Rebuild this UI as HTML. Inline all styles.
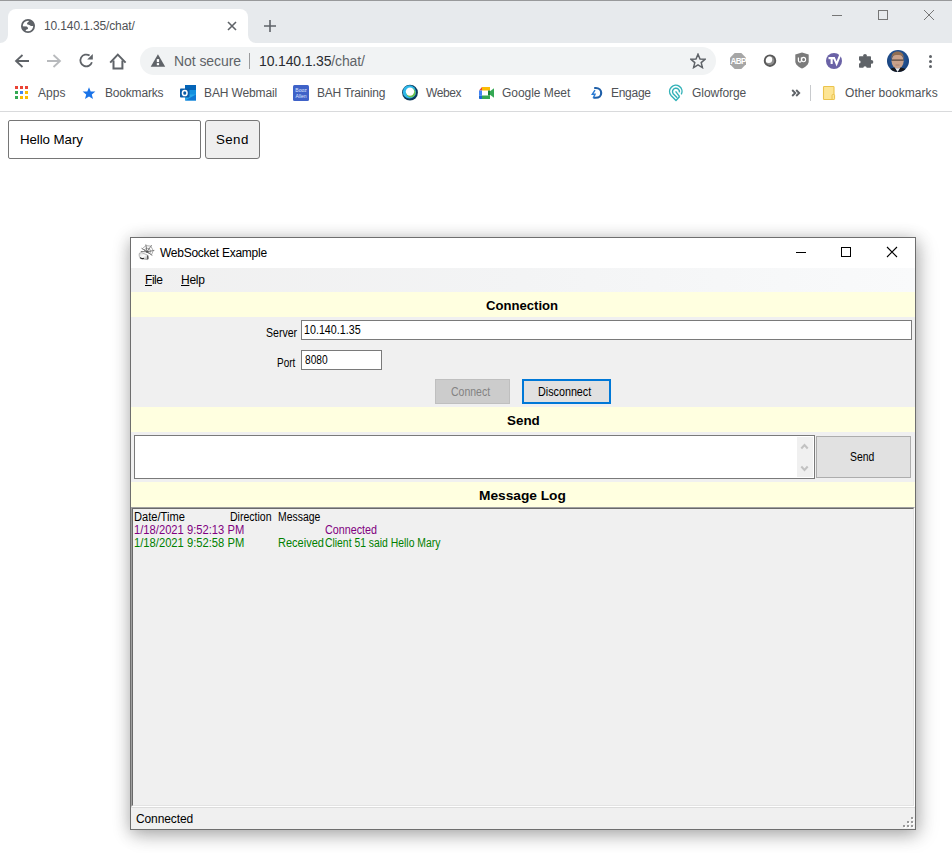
<!DOCTYPE html><html><head><meta charset="utf-8"><style>
html,body{margin:0;padding:0;}
body{width:952px;height:853px;overflow:hidden;position:relative;background:#fff;font-family:"Liberation Sans", sans-serif;}
.t{position:absolute;white-space:nowrap;line-height:1;}
.b{position:absolute;box-sizing:border-box;}
</style></head><body>
<div class="b" style="left:0px;top:0px;width:952px;height:1px;background:#98999b"></div>
<div class="b" style="left:0px;top:1px;width:952px;height:42px;background:#e7eaed"></div>
<div class="b" style="left:8px;top:9px;width:240px;height:34px;background:#fff;border-radius:8px 8px 0 0"></div>
<svg class="b" style="left:0px;top:35px;" width="8" height="8" viewBox="0 0 8 8"><path d="M8 0 V8 H0 A8 8 0 0 0 8 0Z" fill="#fff"/></svg>
<svg class="b" style="left:248px;top:35px;" width="8" height="8" viewBox="0 0 8 8"><path d="M0 0 V8 H8 A8 8 0 0 1 0 0Z" fill="#fff"/></svg>
<svg class="b" style="left:21px;top:19px;" width="14" height="14" viewBox="0 0 14 14"><defs><clipPath id="gc"><circle cx="7" cy="7" r="6.5"/></clipPath></defs><circle cx="7" cy="7" r="6.1" fill="none" stroke="#5f6368" stroke-width="1.8"/><g clip-path="url(#gc)" fill="#5f6368"><path d="M7.6 0 L8.2 2.1 L6.1 4 L6.1 5.3 L8.3 5.9 L10 7.1 L14 7.1 L14 0 Z"/><path d="M0 7.2 L5.9 7.6 L7.1 9 L6.8 10.1 L4.7 11.1 L4.4 14 L0 14 Z"/></g></svg>
<div class="t" style="left:44px;top:20px;font-size:12px;color:#4f5256;font-weight:normal;letter-spacing:-0.125px;">10.140.1.35/chat/</div>
<svg class="b" style="left:227px;top:21px;" width="10" height="10" viewBox="0 0 10 10"><path d="M1 1 L9 9 M9 1 L1 9" stroke="#5f6368" stroke-width="1.6"/></svg>
<svg class="b" style="left:263px;top:19px;" width="14" height="14" viewBox="0 0 14 14"><path d="M7 1 V13 M1 7 H13" stroke="#5f6368" stroke-width="1.6"/></svg>
<div class="b" style="left:832px;top:15px;width:10px;height:1px;background:#767676"></div>
<div class="b" style="left:878px;top:10px;width:10px;height:10px;border:1px solid #767676"></div>
<svg class="b" style="left:923px;top:9px;" width="12" height="12" viewBox="0 0 12 12"><path d="M1 1 L11 11 M11 1 L1 11" stroke="#767676" stroke-width="1"/></svg>
<svg class="b" style="left:14px;top:53px;" width="16" height="16" viewBox="0 0 16 16"><path d="M15 8 H2.5 M8.5 2 L2 8 L8.5 14" fill="none" stroke="#5f6368" stroke-width="1.8"/></svg>
<svg class="b" style="left:46px;top:53px;" width="16" height="16" viewBox="0 0 16 16"><path d="M1 8 H13.5 M7.5 2 L14 8 L7.5 14" fill="none" stroke="#b8babd" stroke-width="1.8"/></svg>
<svg class="b" style="left:78px;top:53px;" width="16" height="16" viewBox="0 0 16 16"><path d="M13.9 9.2 A5.9 5.9 0 1 1 11.6 2.6" fill="none" stroke="#5f6368" stroke-width="1.8"/><path d="M9.2 6.5 L14.8 0.9 L14.8 6.5 Z" fill="#5f6368"/></svg>
<svg class="b" style="left:109px;top:53px;" width="18" height="18" viewBox="0 0 18 18"><path d="M1.2 9.6 L8.8 1.6 L16.6 9.6" fill="none" stroke="#5f6368" stroke-width="2"/><path d="M4.5 7.5 V15.6 H13.4 V7.5" fill="none" stroke="#5f6368" stroke-width="2"/></svg>
<div class="b" style="left:140px;top:47px;width:576px;height:28px;background:#f1f3f4;border-radius:14px"></div>
<svg class="b" style="left:150px;top:54px;" width="16" height="13" viewBox="0 0 16 13"><path d="M7.95 0.3 L15.2 12.7 H0.7 Z" fill="#5f6368"/><rect x="6.8" y="5.1" width="2.3" height="3" fill="#fff"/><rect x="6.8" y="9.1" width="2.3" height="2.1" fill="#fff"/></svg>
<div class="t" style="left:174px;top:54px;font-size:14px;color:#5f6368;font-weight:normal;letter-spacing:-0.071px;">Not secure</div>
<div class="b" style="left:249px;top:53px;width:1px;height:16px;background:#9a9b9d"></div>
<div class="t" style="left:259px;top:54px;font-size:14px;color:#5f6368;font-weight:normal;letter-spacing:-0.15px;"><span style="color:#2a2c30">10.140.1.35</span>/chat/</div>
<svg class="b" style="left:690px;top:53px;" width="16" height="16" viewBox="0 0 16 16"><path d="M8 1.2 L10 6 L15 6.3 L11.2 9.6 L12.4 14.6 L8 11.9 L3.6 14.6 L4.8 9.6 L1 6.3 L6 6 Z" fill="none" stroke="#5f6368" stroke-width="1.5" stroke-linejoin="miter"/></svg>
<svg class="b" style="left:730px;top:53px;" width="16" height="16" viewBox="0 0 16 16"><path d="M4.7 0 H11.3 L16 4.7 V11.3 L11.3 16 H4.7 L0 11.3 V4.7 Z" fill="#a6a6a6"/><text x="8.2" y="11.4" font-family="Liberation Sans" font-weight="bold" font-size="8.2" fill="#fff" text-anchor="middle" letter-spacing="-0.7">ABP</text></svg>
<svg class="b" style="left:763px;top:54px;" width="14" height="14" viewBox="0 0 14 14"><defs><clipPath id="cc"><circle cx="7" cy="6.7" r="5"/></clipPath></defs><g clip-path="url(#cc)"><rect width="14" height="14" fill="#8e8e8e"/><circle cx="5.7" cy="5.4" r="3.5" fill="#fff"/></g><circle cx="7" cy="6.7" r="5.3" fill="none" stroke="#595959" stroke-width="1.9"/></svg>
<svg class="b" style="left:795px;top:52px;" width="14" height="17" viewBox="0 0 14 17"><path d="M0.3 2.6 L7 0.6 L13.7 2.6 V9.2 C13.7 12.6 10.4 15 7 16.6 C3.6 15 0.3 12.6 0.3 9.2 Z" fill="#7b7b7b"/><path d="M3.4 5.6 V8.6 A1.5 1.5 0 0 0 6.4 8.6 V5.6" fill="none" stroke="#fff" stroke-width="1.2"/><ellipse cx="8.6" cy="7.6" rx="2" ry="2.2" fill="none" stroke="#fff" stroke-width="1.1"/></svg>
<svg class="b" style="left:826px;top:52px;" width="17" height="17" viewBox="0 0 17 17"><circle cx="8" cy="9" r="8" fill="#6a62a6"/><rect x="2.5" y="5" width="6.2" height="2.2" fill="#fff"/><rect x="4.6" y="5" width="2.1" height="7" fill="#fff"/><path d="M7.8 5.4 L10.6 11.8 L14.8 1.4" fill="none" stroke="#fff" stroke-width="2"/></svg>
<svg class="b" style="left:858px;top:53px;" width="16" height="16" viewBox="0 0 16 16"><rect x="1" y="3.2" width="12" height="11.6" rx="0.8" fill="#5f6368"/><circle cx="7" cy="2.8" r="1.9" fill="#5f6368"/><circle cx="13.4" cy="8.9" r="1.9" fill="#5f6368"/><circle cx="0.9" cy="8.9" r="1.7" fill="#fff"/><circle cx="7" cy="14.9" r="1.7" fill="#fff"/></svg>
<svg class="b" style="left:887px;top:50px;" width="22" height="22" viewBox="0 0 22 22"><defs><clipPath id="av"><circle cx="11" cy="11" r="11"/></clipPath><radialGradient id="avg" cx="0.5" cy="0.4" r="0.6"><stop offset="0" stop-color="#2f64a8"/><stop offset="1" stop-color="#163f7a"/></radialGradient></defs><g clip-path="url(#av)"><rect width="22" height="22" fill="url(#avg)"/><ellipse cx="10.6" cy="11.2" rx="6" ry="7.6" fill="#c9a18a"/><path d="M4.4 9.5 C4 3.5 7 1.6 10.6 1.6 C14.2 1.6 17.2 3.5 16.8 9.5 L15.8 6.5 C13.5 4.6 8 4.6 5.4 6.5 Z" fill="#8f6d52"/><rect x="4.6" y="9.4" width="12" height="1.5" fill="#5d4a40" opacity="0.85"/><rect x="8.5" y="14.6" width="4" height="0.9" fill="#a07868" opacity="0.8"/><path d="M0 22 C2 18.5 5.5 17.6 8 17.8 L10.6 22 L13.2 17.8 C15.7 17.6 19.5 18.5 22 22 Z" fill="#15171c"/><path d="M8 17.8 L10.6 22 L13.2 17.8 C12 18.6 9.2 18.6 8 17.8 Z" fill="#eeeeee"/></g></svg>
<div class="b" style="left:928.5px;top:55.0px;width:3px;height:3px;background:#5f6368;border-radius:50%"></div>
<div class="b" style="left:928.5px;top:60.0px;width:3px;height:3px;background:#5f6368;border-radius:50%"></div>
<div class="b" style="left:928.5px;top:65.0px;width:3px;height:3px;background:#5f6368;border-radius:50%"></div>
<div class="b" style="left:15px;top:86px;width:3px;height:3px;background:#ea4335"></div>
<div class="b" style="left:20px;top:86px;width:3px;height:3px;background:#ea4335"></div>
<div class="b" style="left:25px;top:86px;width:3px;height:3px;background:#ea4335"></div>
<div class="b" style="left:15px;top:91px;width:3px;height:3px;background:#34a853"></div>
<div class="b" style="left:20px;top:91px;width:3px;height:3px;background:#4285f4"></div>
<div class="b" style="left:25px;top:91px;width:3px;height:3px;background:#fbbc04"></div>
<div class="b" style="left:15px;top:96px;width:3px;height:3px;background:#34a853"></div>
<div class="b" style="left:20px;top:96px;width:3px;height:3px;background:#fbbc04"></div>
<div class="b" style="left:25px;top:96px;width:3px;height:3px;background:#fbbc04"></div>
<div class="t" style="left:38px;top:87px;font-size:12px;color:#4f5256;font-weight:normal;letter-spacing:0.067px;">Apps</div>
<svg class="b" style="left:82px;top:87px;" width="14" height="13" viewBox="0 0 14 13"><path d="M7 0.2 L8.7 4.5 L13.4 4.6 L9.8 7.5 L11 12 L7 9.5 L3 12 L4.2 7.5 L0.6 4.6 L5.3 4.5 Z" fill="#1a73e8"/></svg>
<div class="t" style="left:105px;top:87px;font-size:12px;color:#4f5256;font-weight:normal;letter-spacing:-0.188px;">Bookmarks</div>
<svg class="b" style="left:180px;top:85px;" width="16" height="16" viewBox="0 0 16 16"><rect x="5" y="0" width="11" height="5.5" fill="#0364b8"/><rect x="5" y="5" width="11" height="5" fill="#1490df"/><path d="M5 9.5 H16 V15.5 H5Z" fill="#28a8ea"/><path d="M5 15.5 L16 9.5 V15.5Z" fill="#0f78d4"/><rect x="0" y="3.5" width="9.5" height="9" rx="0.8" fill="#0a5ca8"/><ellipse cx="4.75" cy="8" rx="2.3" ry="2.6" fill="none" stroke="#fff" stroke-width="1.5"/></svg>
<div class="t" style="left:204px;top:87px;font-size:12px;color:#4f5256;font-weight:normal;letter-spacing:-0.12px;">BAH Webmail</div>
<svg class="b" style="left:293px;top:85px;" width="16" height="16" viewBox="0 0 16 16"><rect width="16" height="16" rx="1.5" fill="#3f62c8"/><text x="8" y="7.2" font-size="5" font-family="Liberation Sans" fill="#dfe6ff" text-anchor="middle">Booz</text><text x="8" y="12.8" font-size="5" font-family="Liberation Sans" fill="#dfe6ff" text-anchor="middle">Allen</text></svg>
<div class="t" style="left:317px;top:87px;font-size:12px;color:#4f5256;font-weight:normal;letter-spacing:-0.218px;">BAH Training</div>
<svg class="b" style="left:402px;top:84px;" width="16" height="17" viewBox="0 0 16 17"><circle cx="8" cy="8.6" r="7.9" fill="#0b3a5c"/><circle cx="7.4" cy="7.9" r="6.6" fill="#2fb8ea"/><circle cx="8.9" cy="8.8" r="4.7" fill="#6dbe4b"/><circle cx="8" cy="7.6" r="4.2" fill="#fff"/></svg>
<div class="t" style="left:426px;top:87px;font-size:12px;color:#4f5256;font-weight:normal;letter-spacing:-0.4px;">Webex</div>
<svg class="b" style="left:479px;top:87px;" width="15" height="12" viewBox="0 0 15 12"><path d="M3 0 H11 V3.5 H3Z" fill="#fbbc04"/><path d="M0 3.5 L3 0 V3.5Z" fill="#ea4335"/><path d="M0 3.5 H3 V8.5 H0Z" fill="#4285f4"/><path d="M0 8.5 H3 V12 H1 C0.4 12 0 11.6 0 11Z" fill="#1967d2"/><path d="M3 8.5 H11 V12 H3Z" fill="#34a853"/><path d="M11 4.3 L15 1.2 V10.8 L11 7.7Z" fill="#34a853"/><path d="M11 3.5 V8.5 H9 V3.5Z" fill="#188038"/></svg>
<div class="t" style="left:502px;top:87px;font-size:12px;color:#4f5256;font-weight:normal;letter-spacing:-0.04px;">Google Meet</div>
<svg class="b" style="left:589px;top:86px;" width="14" height="14" viewBox="0 0 14 14"><path d="M5.2 2 H6.8 C10.2 2 12.2 4.2 12.2 6.9 C12.2 9.6 10.2 11.8 6.6 11.8 H4.6" fill="none" stroke="#1f5fa8" stroke-width="2.1"/><path d="M6 4.2 L3.4 8.2 H6 L4.2 12.2" fill="none" stroke="#2a7bd4" stroke-width="1.5"/></svg>
<div class="t" style="left:611px;top:87px;font-size:12px;color:#4f5256;font-weight:normal;letter-spacing:-0.28px;">Engage</div>
<svg class="b" style="left:664px;top:82px;" width="24" height="22" viewBox="0 0 24 22"><g fill="none" stroke="#33b2b8" stroke-width="1.45" stroke-linejoin="round"><path d="M17.3 12.4 A6.2 6.2 0 1 0 7 13.4 L12 18.4 L15.6 14.6"/><path d="M15.4 10.4 A3.5 3.5 0 1 0 9.2 11.8 L13.2 15.8"/><path d="M11.6 9.4 L15.6 14.6"/></g></svg>
<div class="t" style="left:692px;top:87px;font-size:12px;color:#4f5256;font-weight:normal;letter-spacing:-0.05px;">Glowforge</div>
<svg class="b" style="left:791px;top:89px;" width="10" height="8" viewBox="0 0 10 8"><path d="M1.2 1 L4.2 4 L1.2 7 M5.2 1 L8.2 4 L5.2 7" fill="none" stroke="#5f6368" stroke-width="1.9"/></svg>
<div class="b" style="left:810px;top:85px;width:1px;height:16px;background:#c8cacd"></div>
<svg class="b" style="left:822px;top:85px;" width="14" height="16" viewBox="0 0 14 16"><rect x="1.5" y="1.5" width="10.5" height="13" rx="0.8" fill="#fde594" stroke="#ebc34c" stroke-width="1.1"/><rect x="10" y="9.5" width="2.6" height="5" rx="1" fill="#fde594" stroke="#ebc34c" stroke-width="1"/></svg>
<div class="t" style="left:845px;top:87px;font-size:12px;color:#4f5256;font-weight:normal;letter-spacing:0.043px;">Other bookmarks</div>
<div class="b" style="left:0px;top:111px;width:952px;height:1px;background:#d9dadc"></div>
<div class="b" style="left:8px;top:120px;width:193px;height:39px;border:1px solid #767676;border-radius:2px;background:#fff"></div>
<div class="t" style="left:20px;top:133px;font-size:13.33px;color:#000;font-weight:normal;letter-spacing:-0.089px;">Hello Mary</div>
<div class="b" style="left:205px;top:120px;width:55px;height:39px;border:1px solid #767676;border-radius:3px;background:#efefef"></div>
<div class="t" style="left:216px;top:133px;font-size:13.33px;color:#000;font-weight:normal;letter-spacing:0.396px;">Send</div>
<div class="b" style="left:130px;top:237px;width:786px;height:593px;background:#f0f0f0;box-shadow:0 3px 16px rgba(0,0,0,0.30), 5px 6px 20px rgba(0,0,0,0.12)"></div>
<div class="b" style="left:130px;top:237px;width:786px;height:593px;border:1px solid #6e6e6e"></div>
<div class="b" style="left:131px;top:238px;width:784px;height:30px;background:#fff"></div>
<svg class="b" style="left:134px;top:240px;" width="26" height="24" viewBox="0 0 26 24"><defs><linearGradient id="cyl" x1="0" y1="0" x2="1" y2="1"><stop offset="0" stop-color="#d8d8d8"/><stop offset="0.5" stop-color="#ffffff"/><stop offset="1" stop-color="#9a9a9a"/></linearGradient></defs><g fill="none" stroke="#6a6a6a" stroke-width="0.9"><path d="M13 11.8 L11.8 4.5 M13 11.8 L17.6 5.2 M13 11.8 L20.3 10.4 M13 11.8 L18.3 15.4 M13 11.8 L7.5 8.2 M13 11.8 L6.8 11.5"/><path d="M8.3 8.7 L12.0 5.6 L16.9 6.2 L19.2 10.6 L17.5 14.9 Z" stroke="#8a8a8a" stroke-width="0.7"/><path d="M10.2 10.0 L12.4 8.2 L15.3 8.5 L16.6 11.1 L15.7 13.6 Z" stroke="#7a7a7a" stroke-width="0.7"/></g><circle cx="13" cy="11.8" r="1.1" fill="#555"/><path d="M5.4 13.2 C4.6 15.6 5.4 17.8 7.6 18.8 L13.6 19.6 C14.8 18.6 14.6 16.4 13.8 15.2 L7.6 12.6 Z" fill="url(#cyl)" stroke="#8a8a8a" stroke-width="0.6"/><path d="M6 17.6 C7 18.6 9 18.6 10 18.3" stroke="#222" stroke-width="1.2" fill="none"/><path d="M13.6 15.5 L13.8 19.2" stroke="#444" stroke-width="1" fill="none"/></svg>
<div class="t" style="left:160px;top:247px;font-size:12px;color:#000;font-weight:normal;letter-spacing:-0.256px;">WebSocket Example</div>
<div class="b" style="left:796px;top:252px;width:10px;height:1px;background:#000"></div>
<div class="b" style="left:841px;top:247px;width:10px;height:10px;border:1px solid #000"></div>
<svg class="b" style="left:886px;top:246px;" width="12" height="12" viewBox="0 0 12 12"><path d="M1 1 L11 11 M11 1 L1 11" stroke="#000" stroke-width="1.1"/></svg>
<div class="b" style="left:131px;top:268px;width:784px;height:24px;background:linear-gradient(to right,#f0f0f0 0%,#f3f4f5 50%,#f9fafb 100%)"></div>
<div class="t" style="left:145px;top:274px;font-size:12px;color:#000;font-weight:normal;letter-spacing:-0.467px;"><u>F</u>ile</div>
<div class="t" style="left:181px;top:274px;font-size:12px;color:#000;font-weight:normal;letter-spacing:-0.267px;"><u>H</u>elp</div>
<div class="b" style="left:131px;top:292px;width:784px;height:25px;background:#ffffe0"></div>
<div class="t" style="left:486px;top:300px;font-size:12.4px;color:#000;font-weight:bold;letter-spacing:0.0px;transform:scaleX(1.0574);transform-origin:0 0;">Connection</div>
<div class="t" style="left:266px;top:327px;font-size:12.3px;color:#000;font-weight:normal;letter-spacing:0.0px;transform:scaleX(0.858);transform-origin:0 0;">Server</div>
<div class="b" style="left:301px;top:320px;width:611px;height:20px;border:1px solid #7a7a7a;background:#fff"></div>
<div class="t" style="left:304px;top:324px;font-size:12.3px;color:#000;font-weight:normal;letter-spacing:0.0px;transform:scaleX(0.8719);transform-origin:0 0;">10.140.1.35</div>
<div class="t" style="left:277px;top:357px;font-size:12.3px;color:#000;font-weight:normal;letter-spacing:0.0px;transform:scaleX(0.8091);transform-origin:0 0;">Port</div>
<div class="b" style="left:301px;top:350px;width:81px;height:20px;border:1px solid #7a7a7a;background:#fff"></div>
<div class="t" style="left:305px;top:354px;font-size:12.3px;color:#000;font-weight:normal;letter-spacing:0.0px;transform:scaleX(0.8307);transform-origin:0 0;">8080</div>
<div class="b" style="left:435px;top:379px;width:75px;height:25px;border:1px solid #bfbfbf;background:#cccccc"></div>
<div class="t" style="left:451px;top:386px;font-size:12.3px;color:#838383;font-weight:normal;letter-spacing:0.0px;transform:scaleX(0.8543);transform-origin:0 0;">Connect</div>
<div class="b" style="left:522px;top:379px;width:89px;height:25px;border:2px solid #0078d7;background:#e1e1e1"></div>
<div class="t" style="left:538px;top:386px;font-size:12.3px;color:#000;font-weight:normal;letter-spacing:0.0px;transform:scaleX(0.875);transform-origin:0 0;">Disconnect</div>
<div class="b" style="left:131px;top:407px;width:784px;height:25px;background:#ffffe0"></div>
<div class="t" style="left:507px;top:415px;font-size:12.4px;color:#000;font-weight:bold;letter-spacing:0.0px;transform:scaleX(1.0833);transform-origin:0 0;">Send</div>
<div class="b" style="left:134px;top:435px;width:681px;height:44px;border:1px solid #7a7a7a;background:#fff"></div>
<div class="b" style="left:797px;top:437px;width:16px;height:40px;background:#f0f0f0"></div>
<svg class="b" style="left:800px;top:442px;" width="9" height="8" viewBox="0 0 9 8"><path d="M1.3 6.4 L4.5 3.1 L7.7 6.4" fill="none" stroke="#c2c2c2" stroke-width="2.1"/></svg>
<svg class="b" style="left:800px;top:465px;" width="9" height="8" viewBox="0 0 9 8"><path d="M1.3 1.6 L4.5 4.9 L7.7 1.6" fill="none" stroke="#c2c2c2" stroke-width="2.1"/></svg>
<div class="b" style="left:816px;top:436px;width:95px;height:42px;border:1px solid #adadad;background:#e1e1e1"></div>
<div class="t" style="left:850px;top:451px;font-size:12.3px;color:#000;font-weight:normal;letter-spacing:0.0px;transform:scaleX(0.8481);transform-origin:0 0;">Send</div>
<div class="b" style="left:131px;top:482px;width:784px;height:25px;background:#ffffe0"></div>
<div class="t" style="left:479px;top:490px;font-size:12.4px;color:#000;font-weight:bold;letter-spacing:0.0px;transform:scaleX(1.1065);transform-origin:0 0;">Message Log</div>
<div class="b" style="left:131px;top:507px;width:784px;height:300px;border-top:1px solid #a0a0a0;border-left:1px solid #a0a0a0;border-right:1px solid #fff;border-bottom:1px solid #fff"></div>
<div class="b" style="left:132px;top:508px;width:782px;height:298px;border-top:1px solid #696969;border-left:1px solid #696969;border-right:1px solid #e3e3e3;border-bottom:1px solid #e3e3e3;background:#f0f0f0"></div>
<div class="t" style="left:134px;top:511px;font-size:12.3px;color:#000;font-weight:normal;letter-spacing:0.0px;transform:scaleX(0.9036);transform-origin:0 0;">Date/Time</div>
<div class="t" style="left:230px;top:511px;font-size:12.3px;color:#000;font-weight:normal;letter-spacing:0.0px;transform:scaleX(0.8574);transform-origin:0 0;">Direction</div>
<div class="t" style="left:278px;top:511px;font-size:12.3px;color:#000;font-weight:normal;letter-spacing:0.0px;transform:scaleX(0.8469);transform-origin:0 0;">Message</div>
<div class="t" style="left:134px;top:524px;font-size:12.3px;color:#800080;font-weight:normal;letter-spacing:0.0px;transform:scaleX(0.9109);transform-origin:0 0;">1/18/2021 9:52:13 PM</div>
<div class="t" style="left:325px;top:524px;font-size:12.3px;color:#800080;font-weight:normal;letter-spacing:0.0px;transform:scaleX(0.8746);transform-origin:0 0;">Connected</div>
<div class="t" style="left:134px;top:537px;font-size:12.3px;color:#008000;font-weight:normal;letter-spacing:0.0px;transform:scaleX(0.9109);transform-origin:0 0;">1/18/2021 9:52:58 PM</div>
<div class="t" style="left:278px;top:537px;font-size:12.3px;color:#008000;font-weight:normal;letter-spacing:0.0px;transform:scaleX(0.896);transform-origin:0 0;">Received</div>
<div class="t" style="left:325px;top:537px;font-size:12.3px;color:#008000;font-weight:normal;letter-spacing:0.0px;transform:scaleX(0.8438);transform-origin:0 0;">Client 51 said Hello Mary</div>
<div class="b" style="left:131px;top:807px;width:784px;height:1px;background:#dcdcdc"></div>
<div class="t" style="left:136px;top:813px;font-size:12px;color:#000;font-weight:normal;letter-spacing:-0.113px;">Connected</div>
<div class="b" style="left:912px;top:818px;width:2px;height:2px;background:#fff"></div>
<div class="b" style="left:911px;top:817px;width:2px;height:2px;background:#9a9a9a"></div>
<div class="b" style="left:908px;top:822px;width:2px;height:2px;background:#fff"></div>
<div class="b" style="left:907px;top:821px;width:2px;height:2px;background:#9a9a9a"></div>
<div class="b" style="left:912px;top:822px;width:2px;height:2px;background:#fff"></div>
<div class="b" style="left:911px;top:821px;width:2px;height:2px;background:#9a9a9a"></div>
<div class="b" style="left:904px;top:826px;width:2px;height:2px;background:#fff"></div>
<div class="b" style="left:903px;top:825px;width:2px;height:2px;background:#9a9a9a"></div>
<div class="b" style="left:908px;top:826px;width:2px;height:2px;background:#fff"></div>
<div class="b" style="left:907px;top:825px;width:2px;height:2px;background:#9a9a9a"></div>
<div class="b" style="left:912px;top:826px;width:2px;height:2px;background:#fff"></div>
<div class="b" style="left:911px;top:825px;width:2px;height:2px;background:#9a9a9a"></div>
</body></html>
